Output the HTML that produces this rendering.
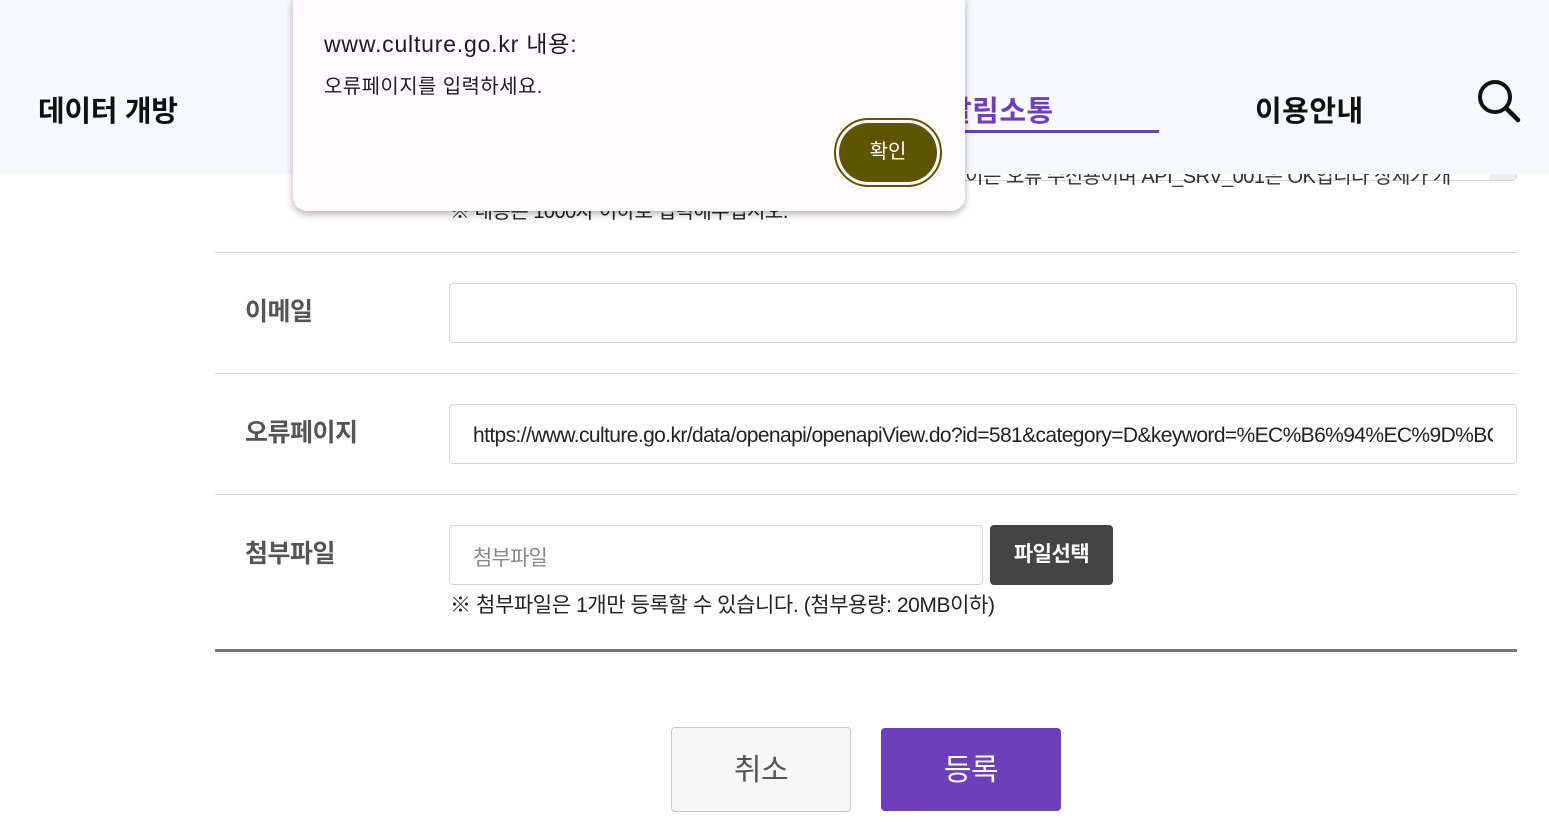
<!DOCTYPE html>
<html><head><meta charset="utf-8">
<style>
*{margin:0;padding:0;box-sizing:border-box}
body{width:1549px;height:832px;overflow:hidden;background:#fff;font-family:"Liberation Sans","Noto Sans CJK KR",sans-serif;position:relative;color:#222}
.a{position:absolute}
.lbl{font-size:25px;font-weight:700;color:#555;letter-spacing:-0.5px}
.inp{border:1px solid #d4d4d4;border-radius:4px;background:#fff}
.line{height:1px;background:#d6d6d6;left:215px;width:1302px}
</style></head><body>
<div class="a inp" style="left:449px;top:120px;width:1068px;height:61px"></div>
<div class="a" style="left:1490px;top:160px;width:26px;height:20px;background:#eee"></div>
<div class="a" style="left:955px;top:160px;font-size:20px;color:#333;letter-spacing:-0.5px">, 이는 오류 수신용이며 API_SRV_001은 OK입니다 상세가 개</div>
<div class="a" style="left:450px;top:195px;font-size:20px;color:#222;letter-spacing:-0.5px">※ 내용은 1000자 이하로 입력해주십시오.</div>

<div class="a line" style="top:252px"></div>
<div class="a lbl" style="left:245px;top:292px">이메일</div>
<div class="a inp" style="left:449px;top:283px;width:1068px;height:60px"></div>
<div class="a line" style="top:373px"></div>
<div class="a lbl" style="left:245px;top:413px">오류페이지</div>
<div class="a inp" style="left:449px;top:404px;width:1068px;height:60px;overflow:hidden;white-space:nowrap;padding:19px 24px 0 23px;font-size:21px;color:#222;letter-spacing:-0.6px"><div style="overflow:hidden;width:1020px">https://www.culture.go.kr/data/openapi/openapiView.do?id=581&amp;category=D&amp;keyword=%EC%B6%94%EC%9D%BC</div></div>
<div class="a line" style="top:494px"></div>
<div class="a lbl" style="left:245px;top:534px">첨부파일</div>
<div class="a inp" style="left:449px;top:525px;width:534px;height:60px;padding:16px 0 0 23px;font-size:21px;color:#888;letter-spacing:-0.8px">첨부파일</div>
<div class="a" style="left:990px;top:525px;width:123px;height:60px;background:#444;border-radius:4px;color:#fff;font-size:21px;font-weight:700;text-align:center;line-height:60px;letter-spacing:-0.5px">파일선택</div>
<div class="a" style="left:450px;top:589px;font-size:21px;color:#222;letter-spacing:-0.4px">※ 첨부파일은 1개만 등록할 수 있습니다. (첨부용량: 20MB이하)</div>
<div class="a" style="left:215px;top:649px;width:1302px;height:3px;background:#777"></div>
<div class="a" style="left:671px;top:727px;width:180px;height:85px;border:1px solid #c8c8c8;border-radius:4px;background:#f7f7f7;color:#555;font-size:30px;text-align:center;line-height:86px;letter-spacing:-0.5px">취소</div>
<div class="a" style="left:881px;top:728px;width:180px;height:83px;border-radius:4px;background:#6d3fb8;color:#fff;font-size:30px;text-align:center;line-height:86px;letter-spacing:-0.5px">등록</div>

<div class="a" style="left:0;top:0;width:1549px;height:174px;background:#f7f8f9"></div>
<div class="a" style="left:38px;top:88px;font-size:29px;font-weight:700;color:#111;letter-spacing:-0.3px">데이터 개방</div>
<div class="a" style="left:945px;top:88px;font-size:29px;font-weight:700;color:#6d3fb8;letter-spacing:0.5px">알림소통</div>
<div class="a" style="left:960px;top:130px;width:199px;height:3px;background:#6d3fb8"></div>
<div class="a" style="left:1255px;top:88px;font-size:29px;font-weight:700;color:#111;letter-spacing:0.5px">이용안내</div>
<svg class="a" style="left:1475px;top:78px" width="48" height="46" viewBox="0 0 48 46"><circle cx="20" cy="19" r="15" fill="none" stroke="#111" stroke-width="4"/><line x1="31" y1="30" x2="43" y2="42" stroke="#111" stroke-width="4.5" stroke-linecap="round"/></svg>

<div class="a" style="left:293px;top:-10px;width:672px;height:221px;background:#fffbfe;border-radius:14px;box-shadow:0 3px 8px rgba(0,0,0,.3)"></div>
<div class="a" style="left:324px;top:25px;font-size:23px;color:#1c1b1f;letter-spacing:0.8px">www.culture.go.kr 내용:</div>
<div class="a" style="left:324px;top:70px;font-size:20px;color:#1c1b1f;letter-spacing:0.4px">오류페이지를 입력하세요.</div>
<div class="a" style="left:834px;top:118px;width:108px;height:69px;border-radius:35px;border:2px solid #5f5400;padding:3px;background:#fffbfe">
<div style="width:100%;height:100%;border-radius:30px;background:#5f5400;color:#fff;font-size:20px;text-align:center;line-height:59px">확인</div></div>
</body></html>
